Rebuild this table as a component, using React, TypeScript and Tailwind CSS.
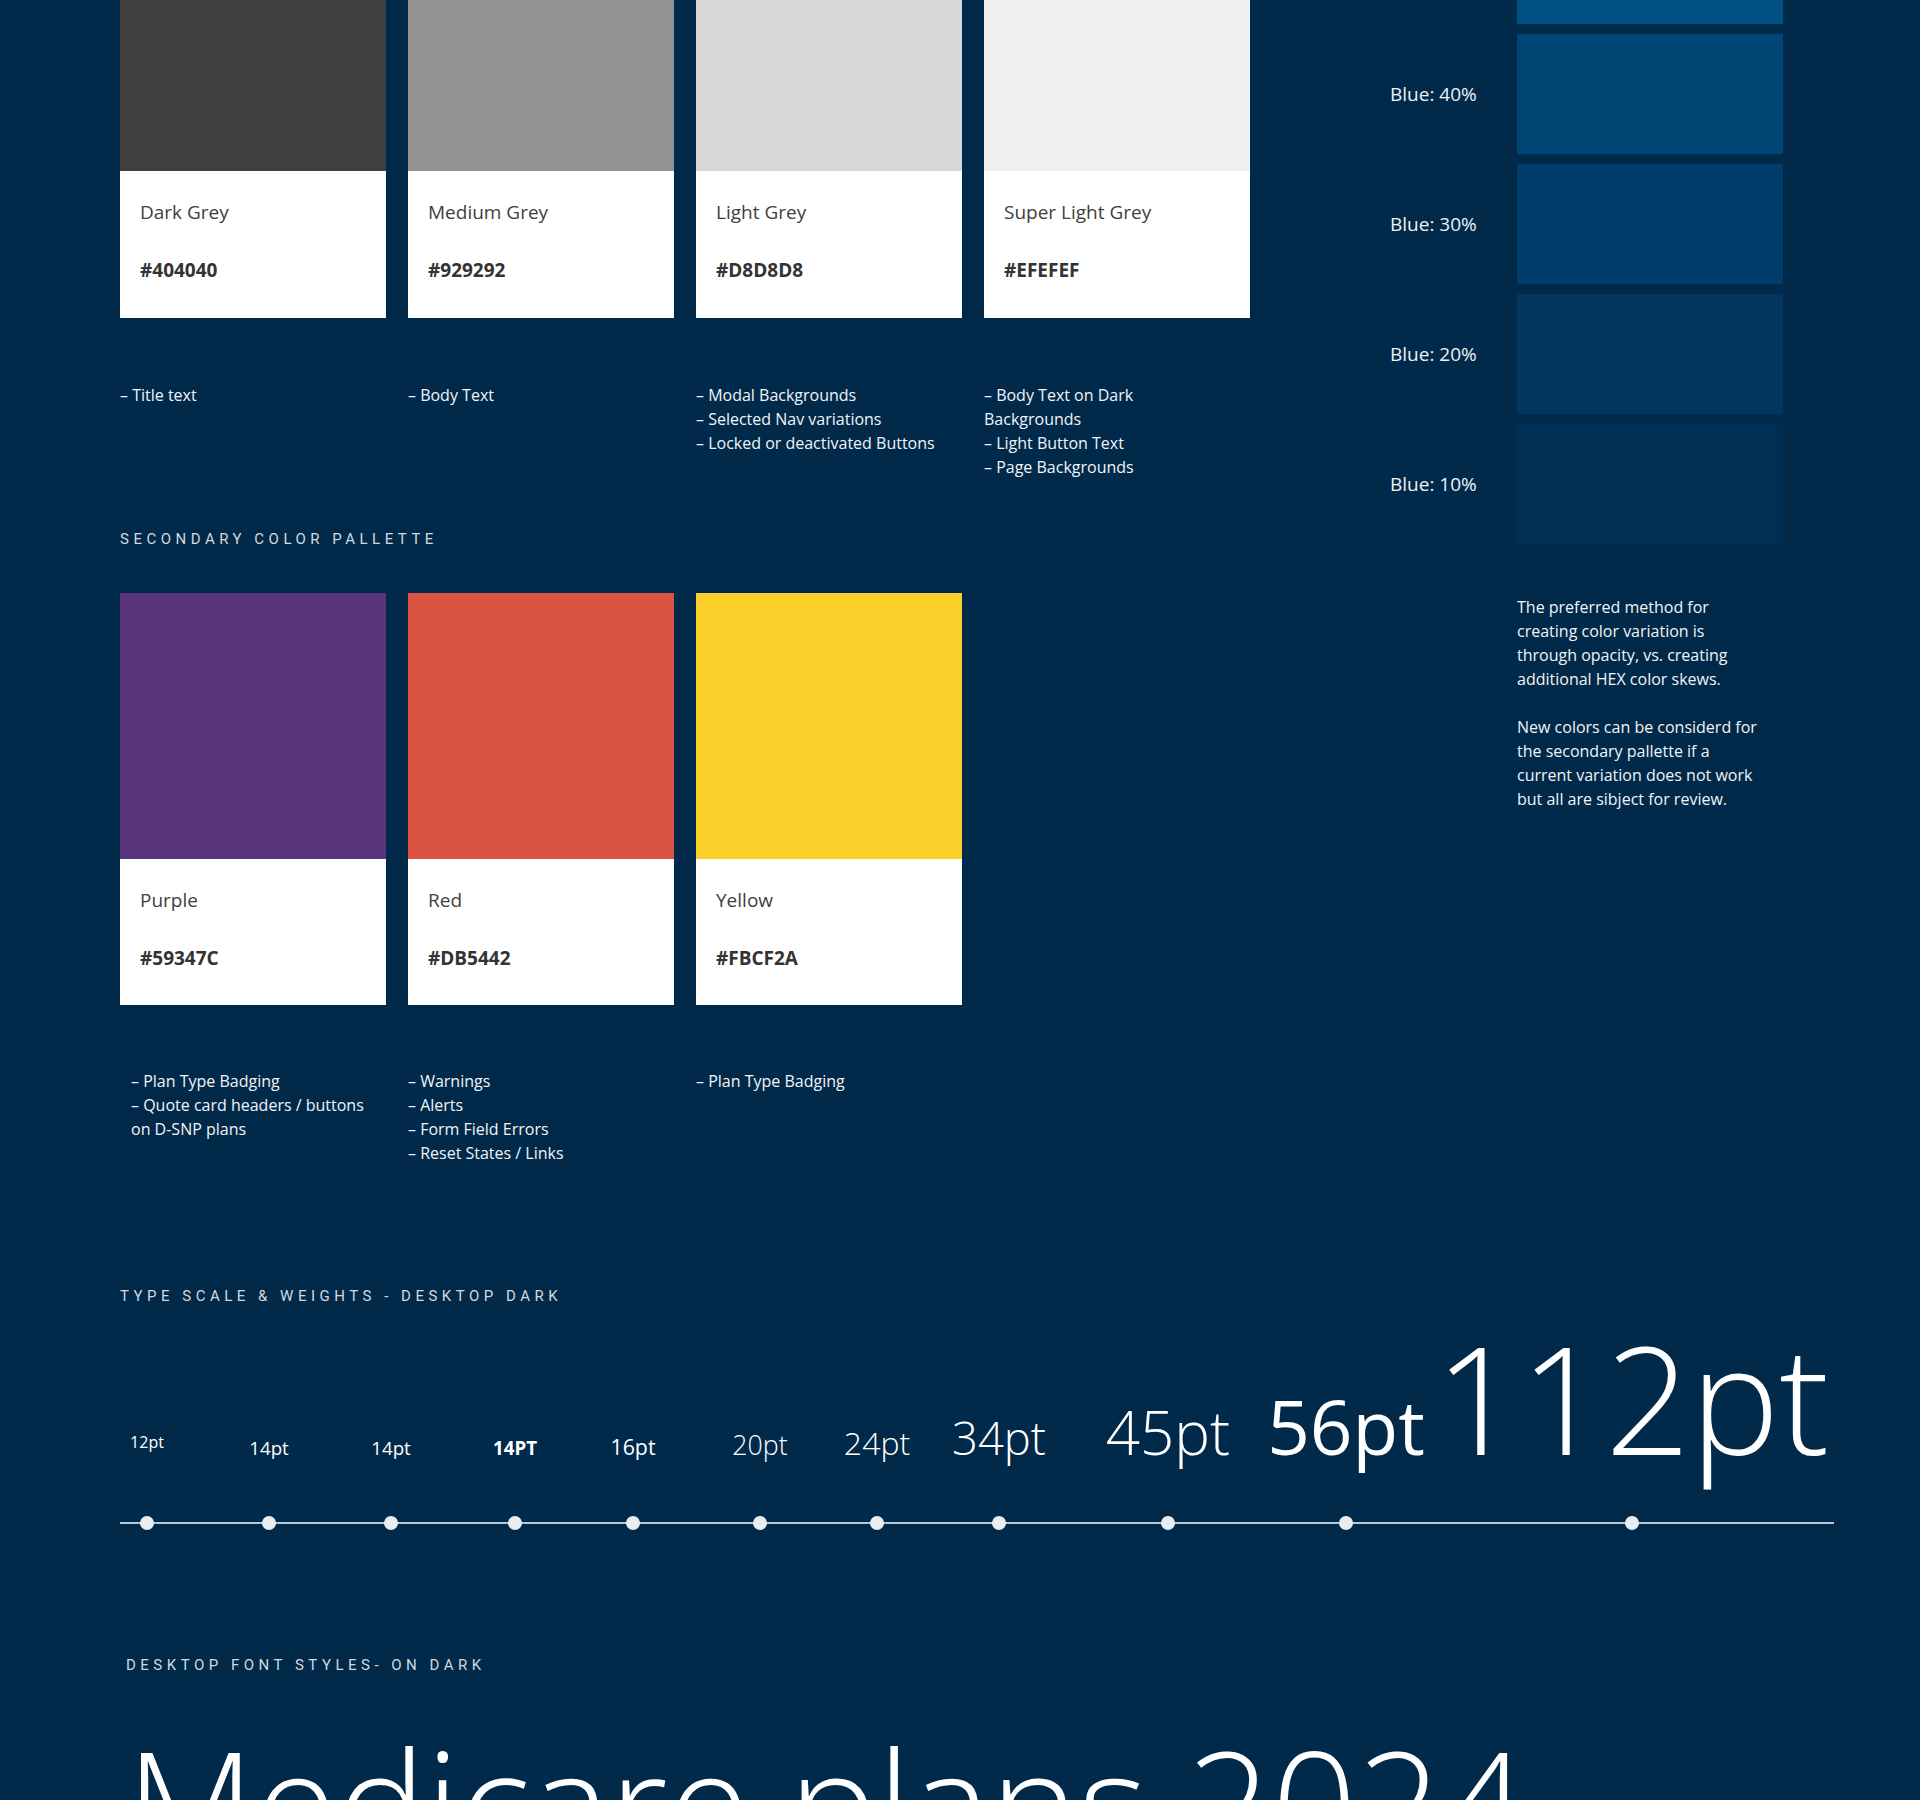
import React from 'react';

type Swatch = {
  name: string;
  hex: string;
  swatch: string;
  notes: string[];
  notesPad?: string;
};

const greys: Swatch[] = [
  { name: 'Dark Grey', hex: '#404040', swatch: 'bg-[#404040]', notes: ['– Title text'] },
  { name: 'Medium Grey', hex: '#929292', swatch: 'bg-[#929292]', notes: ['– Body Text'] },
  {
    name: 'Light Grey',
    hex: '#D8D8D8',
    swatch: 'bg-[#d8d8d8]',
    notes: ['– Modal Backgrounds', '– Selected Nav variations', '– Locked or deactivated Buttons'],
  },
  {
    name: 'Super Light Grey',
    hex: '#EFEFEF',
    swatch: 'bg-[#efefef]',
    notes: ['– Body Text on Dark', 'Backgrounds', '– Light Button Text', '– Page Backgrounds'],
  },
];

const secondary: Swatch[] = [
  {
    name: 'Purple',
    hex: '#59347C',
    swatch: 'bg-[#59347c]',
    notes: ['– Plan Type Badging', '– Quote card headers / buttons', 'on D-SNP plans'],
    notesPad: 'pl-[11px]',
  },
  {
    name: 'Red',
    hex: '#DB5442',
    swatch: 'bg-[#db5442]',
    notes: ['– Warnings', '– Alerts', '– Form Field Errors', '– Reset States / Links'],
  },
  { name: 'Yellow', hex: '#FBCF2A', swatch: 'bg-[#fbcf2a]', notes: ['– Plan Type Badging'] },
];

const blues = [
  { label: 'Blue: 40%', swatch: 'bg-[#004675]' },
  { label: 'Blue: 30%', swatch: 'bg-[#003d6a]' },
  { label: 'Blue: 20%', swatch: 'bg-[#00365f]' },
  { label: 'Blue: 10%', swatch: 'bg-[#002f55]' },
];

// each stop is a zero-width column, spaced by the distance between dot centres
const scale = [
  { label: '12pt', ml: 'ml-[27px]', type: 'text-[16px] font-normal -translate-y-[7px]' },
  { label: '14pt', ml: 'ml-[122px]', type: 'text-[18.7px] font-normal' },
  { label: '14pt', ml: 'ml-[122px]', type: 'text-[18.7px] font-normal' },
  { label: '14PT', ml: 'ml-[124px]', type: 'text-[18.7px] font-bold' },
  { label: '16pt', ml: 'ml-[118px]', type: 'text-[21.3px] font-normal' },
  { label: '20pt', ml: 'ml-[127px]', type: 'text-[26.7px] font-light' },
  { label: '24pt', ml: 'ml-[117px]', type: 'text-[32px] font-light' },
  { label: '34pt', ml: 'ml-[122px]', type: 'text-[45.3px] font-light' },
  { label: '45pt', ml: 'ml-[169px]', type: 'text-[60px] font-light' },
  { label: '56pt', ml: 'ml-[178px]', type: 'text-[74.7px] font-normal' },
  { label: '112pt', ml: 'ml-[286px]', type: 'text-[149.3px] font-light' },
];

const heading = "font-['Roboto',sans-serif] text-[15px] leading-[20px] tracking-[0.3em] text-[#d3d9df] uppercase";

function ColorCard({ item, tall }: { item: Swatch; tall?: boolean }) {
  return (
    <div className="flex w-[266px] flex-col">
      <div className={`${item.swatch} ${tall ? 'h-[266px]' : 'h-[171px]'}`} />
      <div className={`bg-white pl-[20px] ${tall ? 'h-[146px] pt-[28px]' : 'h-[147px] pt-[28px]'}`}>
        <p className="text-[19px] leading-[26px] text-[#404040]">{item.name}</p>
        <p className="mt-[32px] text-[19px] font-bold leading-[26px] text-[#333333]">{item.hex}</p>
      </div>
      <div className={`${tall ? 'mt-[64px]' : 'mt-[65px]'} ${item.notesPad ?? ''} text-[16px] leading-[24px] text-[#f2f4f6]`}>
        {item.notes.map((n) => (
          <p key={n} className="whitespace-nowrap">
            {n}
          </p>
        ))}
      </div>
    </div>
  );
}

export default function App() {
  return (
    <div className="h-[1800px] w-[1920px] overflow-hidden bg-[#00294a] font-['Open_Sans',sans-serif] text-white">
      <div className="flex pl-[120px]">
        {/* palettes */}
        <div className="w-[1130px]">
          <div className="flex gap-x-[22px]">
            {greys.map((g) => (
              <ColorCard key={g.name} item={g} />
            ))}
          </div>

          <h2 className={`mt-[50px] ${heading}`}>Secondary Color Pallette</h2>

          <div className="mt-[44px] flex gap-x-[22px]">
            {secondary.map((s) => (
              <ColorCard key={s.name} item={s} tall />
            ))}
          </div>
        </div>

        {/* blue opacity steps */}
        <div className="ml-[140px] flex flex-col">
          <div className="flex gap-[40px]">
            <div className="w-[87px]" />
            <div className="h-[24px] w-[266px] bg-[#005083]" />
          </div>
          <div className="mt-[10px] flex flex-col gap-[10px]">
            {blues.map((b) => (
              <div key={b.label} className="flex items-center gap-[40px]">
                <span className="w-[87px] whitespace-nowrap text-[19px] text-[#eef1f4]">{b.label}</span>
                <div className={`h-[120px] w-[266px] ${b.swatch}`} />
              </div>
            ))}
          </div>
          <div className="mt-[51px] pl-[127px] text-[16px] leading-[24px] text-[#f2f4f6]">
            <p>The preferred method for</p>
            <p>creating color variation is</p>
            <p>through opacity, vs. creating</p>
            <p>additional HEX color skews.</p>
            <p className="mt-[24px]">New colors can be considerd for</p>
            <p>the secondary pallette if a</p>
            <p>current variation does not work</p>
            <p>but all are sibject for review.</p>
          </div>
        </div>
      </div>

      {/* type scale */}
      <section className="mt-[121px] pl-[120px]">
        <h2 className={heading}>Type Scale &amp; Weights - Desktop Dark</h2>
        <div className="mt-[17px] flex w-[1714px] items-baseline">
          {scale.map((s, i) => (
            <div key={i} className={`flex w-0 justify-center ${s.ml}`}>
              <span className={`whitespace-nowrap leading-none text-white ${s.type}`}>{s.label}</span>
            </div>
          ))}
        </div>
        <div className="mt-[44px] flex h-[14px] w-[1714px] items-center bg-[linear-gradient(#b9c6d4,#b9c6d4)] bg-[length:100%_2px] bg-center bg-no-repeat">
          {scale.map((s, i) => (
            <div key={i} className={`flex w-0 justify-center ${s.ml}`}>
              <span className="h-[14px] w-[14px] shrink-0 rounded-full bg-[#e8edf2]" />
            </div>
          ))}
        </div>
      </section>

      {/* font styles */}
      <section className="mt-[125px] pl-[126px]">
        <h2 className={heading}>Desktop Font Styles- on Dark</h2>
        <p className="mt-[53px] whitespace-nowrap text-[149.3px] font-light leading-none text-white">
          Medicare plans 2024
        </p>
      </section>
    </div>
  );
}
